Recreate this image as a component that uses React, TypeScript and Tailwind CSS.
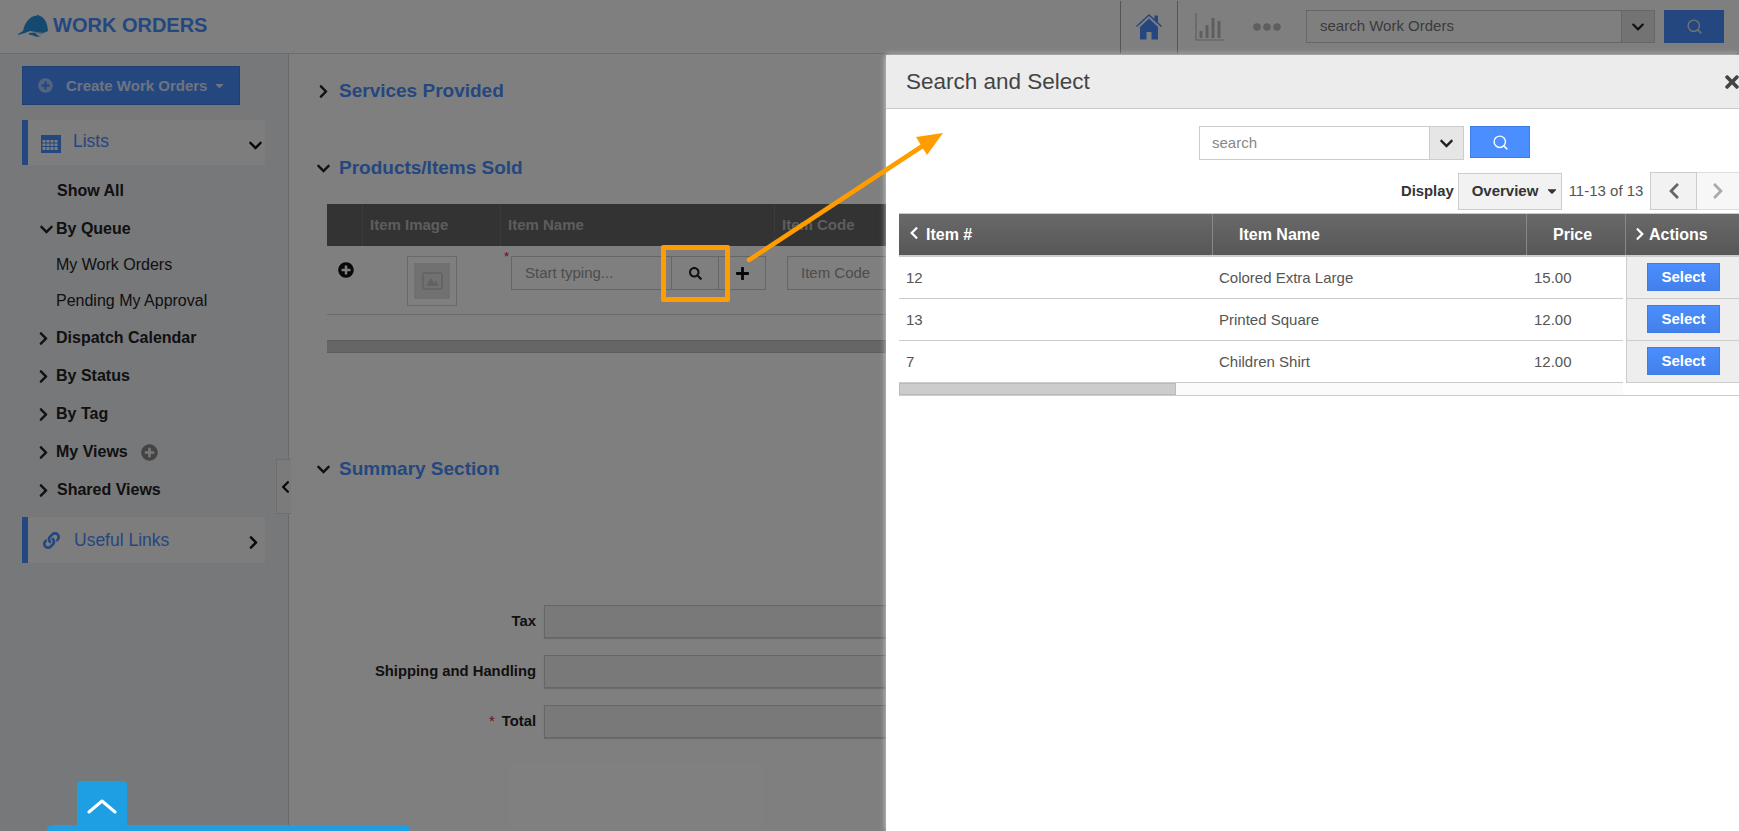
import React from "react";
import { FaChevronDown, FaChevronRight, FaChevronLeft, FaSearch, FaPlus, FaPlusCircle, FaLink, FaCaretDown, FaTimes } from "react-icons/fa";
import { FiSearch } from "react-icons/fi";

const Logo = () => (
  <svg width="32" height="24" viewBox="0 0 32 24" className="shrink-0">
    <path d="M1 20 L6 17 C8 8 13 2 20 1.5 L21 0.5 L22 1.5 C27 3 30.5 8 31 17 C28 18.5 26 19.5 22 19.5 L18 18 L13 17 L8 19 L1 21 Z" fill="#2b94e0" />
    <path d="M12 19 L18 18.5 L21 21.5 L24 22 L20 23 L16 21.5 L12 20.5 Z" fill="#2b94e0" />
    <path d="M16 17.5 L22 18.5 L27 19 L24 21 L21 19.5 L17 19 Z" fill="#cfd8e3" />
  </svg>
);

const HomeIcon = () => (
  <svg width="28" height="27" viewBox="0 0 28 27" fill="#4b8eff">
    <path d="M1 13 L14 1 L19.5 6 L19.5 2.5 L23 2.5 L23 9.2 L27 13 L26 14 L14 3 L2 14 Z" />
    <path d="M5 14 L14 5.5 L23 14 L23 26.5 L16.5 26.5 L16.5 19 L11.5 19 L11.5 26.5 L5 26.5 Z" />
  </svg>
);

const BarsIcon = () => (
  <svg width="29" height="28" viewBox="0 0 29 28" fill="none" stroke="#bdbdbd">
    <path d="M1 0 V27 H29" strokeWidth="1.2" />
    <path d="M6 25 V18 M12 25 V12 M18 25 V5 M24 25 V8" strokeWidth="3" />
  </svg>
);

const Dots = () => (
  <svg width="28" height="8" viewBox="0 0 28 8" fill="#bdbdbd">
    <circle cx="4" cy="4" r="3.8" />
    <circle cx="14" cy="4" r="3.8" />
    <circle cx="24" cy="4" r="3.8" />
  </svg>
);

const Calendar = () => (
  <svg width="20" height="18" viewBox="0 0 20 18" fill="#4b8eff">
    <path fillRule="evenodd" d="M0 0 H20 V18 H0 Z M1.5 5 V7.5 H4.5 V5 Z M5.5 5 V7.5 H8.5 V5 Z M9.5 5 V7.5 H12.5 V5 Z M13.5 5 V7.5 H16.5 V5 Z M1.5 8.5 V11 H4.5 V8.5 Z M5.5 8.5 V11 H8.5 V8.5 Z M9.5 8.5 V11 H12.5 V8.5 Z M13.5 8.5 V11 H16.5 V8.5 Z M1.5 12 V15 H4.5 V12 Z M5.5 12 V15 H8.5 V12 Z M9.5 12 V15 H12.5 V12 Z M13.5 12 V15 H16.5 V12 Z" />
  </svg>
);

const ImageGlyph = () => (
  <svg width="21" height="18" viewBox="0 0 21 18">
    <rect x="1" y="1" width="19" height="16" rx="1.5" fill="none" stroke="#c4c4c4" strokeWidth="1.6" />
    <path d="M4 14 L9 6 L12 11 L14 8.5 L17 14 Z" fill="#c4c4c4" />
  </svg>
);

const Arrow = () => (
  <svg className="absolute left-[740px] top-[125px] pointer-events-none" width="210" height="145" viewBox="0 0 210 145">
    <path d="M9 135 L184 20" stroke="#ff9c00" strokeWidth="4.5" strokeLinecap="round" />
    <polygon points="203,8 176,12 187,30" fill="#ff9c00" />
  </svg>
);

const NavRow = ({ label, bold = true, open, collapsed, h = "h-[38px]", extra }: any) => (
  <div className={`flex items-center ${h} text-[16px] ${bold ? "font-bold" : ""} text-[#222]`}>
    <span className="w-[16px] mr-[2px] ml-[38px] flex justify-center">
      {open && <FaChevronDown className="text-[15px]" />}
      {collapsed && <FaChevronRight className="text-[15px] -ml-[5px]" />}
    </span>
    <span>{label}</span>
    {extra}
  </div>
);

const Heading = ({ label, open }: { label: string; open?: boolean }) => (
  <div className="flex items-center h-[24px]">
    <span className="w-[23px] flex">
      {open ? <FaChevronDown className="text-[15px] text-[#222]" /> : <FaChevronRight className="text-[15px] text-[#222]" />}
    </span>
    <span className="text-[19px] font-bold text-[#4b8eff]">{label}</span>
  </div>
);

const FormRow = ({ label, star }: { label: string; star?: boolean }) => (
  <div className="flex items-center h-[33px]">
    <div className="w-[255px] pr-[8px] text-right text-[14.8px] font-bold text-[#222]">
      {star && <span className="text-[#e02020] font-normal mr-[7px]">*</span>}
      {label}
    </div>
    <div className="flex-1 h-full border border-[#ccc] bg-[#f3f3f3] shadow-[0_1px_1px_rgba(0,0,0,0.15)]" />
  </div>
);

const rows = [
  { id: "12", name: "Colored Extra Large", price: "15.00" },
  { id: "13", name: "Printed Square", price: "12.00" },
  { id: "7", name: "Children Shirt", price: "12.00" },
];

export default function App() {
  return (
    <div className="relative w-[1739px] h-[831px] overflow-hidden bg-white text-[#222] font-['Liberation_Sans',Arial,sans-serif]">
      {/* header */}
      <header className="flex items-center h-[54px] border-b border-[#d8d8d8] bg-white">
        <div className="ml-[17px] -mt-[2px]"><Logo /></div>
        <span className="ml-[4px] -mt-[4px] text-[20px] font-bold text-[#4b8eff]">WORK ORDERS</span>
        <div className="ml-auto flex items-center h-full">
          <div className="flex items-center justify-center w-[58px] h-[52px] border-x border-[#aaa]"><HomeIcon /></div>
          <div className="w-[62px] flex justify-center"><BarsIcon /></div>
          <div className="w-[54px] flex justify-center"><Dots /></div>
          <div className="flex ml-[12px] h-[33px] w-[349px] border border-[#ccc]">
            <div className="flex-1 pl-[13px] flex items-center text-[15px] text-[#777]">search Work Orders</div>
            <div className="w-[33px] border-l border-[#ccc] bg-[#e6e6e6] flex items-center justify-center"><FaChevronDown className="text-[14px] text-[#222]" /></div>
          </div>
          <div className="ml-[9px] mr-[15px] w-[60px] h-[33px] bg-[#4b8eff] flex items-center justify-center"><FiSearch className="text-[17px] text-[#e6e6e6]" /></div>
        </div>
      </header>

      <div className="flex h-[777px]">
        {/* sidebar */}
        <aside className="relative w-[289px] shrink-0 border-r border-[#d5d5d5] bg-[#eff0f4] pl-[22px] pt-[12px]">
          <div className="w-[218px] h-[39px] bg-[#4b8eff] border border-[#3f7de6] flex items-center pl-[15px] text-white">
            <FaPlusCircle className="text-[15px] text-[#a9c8ff]" />
            <span className="ml-[13px] mt-[1px] text-[15px] font-bold text-[#dbe7ff]">Create Work Orders</span>
            <FaCaretDown className="ml-[6px] text-[13px] text-[#dbe7ff]" />
          </div>
          <div className="mt-[15px] w-[243px] h-[45px] bg-[#fafafa] border-l-[6px] border-[#4b8eff] flex items-center">
            <span className="ml-[13px] mt-[2px]"><Calendar /></span>
            <span className="ml-[12px] text-[17.5px] text-[#4b8eff] -mt-[2px]">Lists</span>
            <FaChevronDown className="ml-auto mr-[2px] mt-[6px] text-[15px] text-[#111]" />
          </div>
          <div className="-ml-[22px] pt-[7px]">
            <NavRow label={<span className="ml-[1px]">Show All</span>} />
            <NavRow label="By Queue" open />
            <NavRow label="My Work Orders" bold={false} h="h-[34px]" />
            <NavRow label="Pending My Approval" bold={false} h="h-[37px]" />
            <NavRow label="Dispatch Calendar" collapsed />
            <NavRow label="By Status" collapsed />
            <NavRow label="By Tag" collapsed />
            <NavRow label="My Views" collapsed extra={<FaPlusCircle className="ml-[13px] text-[17px] text-[#888]" />} />
            <NavRow label={<span className="ml-[1px]">Shared Views</span>} collapsed />
          </div>
          <div className="mt-[8px] w-[243px] h-[46px] bg-[#fafafa] border-l-[6px] border-[#4b8eff] flex items-center">
            <FaLink className="ml-[15px] text-[17px] text-[#4b8eff]" />
            <span className="ml-[14px] text-[17.5px] text-[#4b8eff]">Useful Links</span>
            <FaChevronRight className="ml-auto mr-[4px] mt-[4px] text-[15px] text-[#111]" />
          </div>
          <div className="absolute left-[276px] top-[405px] w-[15px] h-[55px] border border-r-0 border-[#ddd] bg-[#f7f7f7] flex items-center pl-[3px]">
            <FaChevronLeft className="text-[14px] text-[#111]" />
          </div>
        </aside>

        {/* main */}
        <main className="flex-1 pl-[38px] pt-[25px]">
          <div className="-ml-[11px]"><Heading label="Services Provided" /></div>
          <div className="-ml-[11px] mt-[53px]"><Heading label="Products/Items Sold" open /></div>
          <div className="w-[1200px] mt-[24px]">
            <div className="flex h-[42px] bg-[#666] text-[15px] font-bold text-[#bbb] items-center">
              <div className="w-[36px] h-full border-r border-[#777]" />
              <div className="w-[138px] h-full border-r border-[#777] pl-[7px] flex items-center">Item Image</div>
              <div className="w-[274px] h-full border-r border-[#777] pl-[7px] flex items-center">Item Name</div>
              <div className="pl-[7px]">Item Code</div>
            </div>
            <div className="flex h-[69px] border-b border-[#d5d5d5] pt-[10px]">
              <FaPlusCircle className="ml-[11px] mt-[6px] text-[16px] text-[#111] shrink-0" />
              <div className="ml-[53px] w-[50px] h-[50px] border border-[#d5d5d5] p-[6px] shrink-0">
                <div className="w-full h-full bg-[#e3e3e3] flex items-center justify-center"><ImageGlyph /></div>
              </div>
              <div className="relative ml-[54px] flex h-[34px]">
                <span className="absolute -left-[7px] -top-[6px] text-[13px] leading-none text-[#e02020]">*</span>
                <div className="w-[161px] border border-[#ccc] pl-[13px] flex items-center text-[15px] text-[#999]">Start typing...</div>
                <div className="w-[47px] border border-l-0 border-[#ccc] flex items-center justify-center"><FaSearch className="text-[13px] text-[#222]" /></div>
                <div className="w-[47px] border border-l-0 border-[#ccc] flex items-center justify-center"><FaPlus className="text-[15px] text-[#111]" /></div>
                <div className="ml-[21px] w-[200px] border border-[#ccc] pl-[13px] flex items-center text-[15px] text-[#999]">Item Code</div>
              </div>
            </div>
            <div className="mt-[25px] h-[13px] bg-[#ccc] border-y border-[#bbb]" />
          </div>
          <div className="-ml-[11px] mt-[104px]"><Heading label="Summary Section" open /></div>
          <div className="-ml-[38px] mt-[124px] w-[1000px] flex flex-col gap-[17px]">
            <FormRow label="Tax" />
            <FormRow label="Shipping and Handling" />
            <FormRow label="Total" star />
          </div>
        </main>
      </div>

      {/* dim layer */}
      <div className="absolute inset-0 bg-black/50" />

      {/* back to top */}
      <div className="absolute left-[77px] bottom-[6px] w-[50px] h-[44px] rounded-t-[4px] bg-[#1e9fe3] flex items-center justify-center">
        <svg width="30" height="16" viewBox="0 0 30 16" fill="none" stroke="#fff" strokeWidth="3" strokeLinecap="round" strokeLinejoin="round" className="mt-[6px]"><path d="M2 14 L15 3 L28 14" /></svg>
      </div>
      <div className="absolute left-[47px] bottom-0 w-[363px] h-[6px] rounded-t-[5px] bg-[#1e9fe3]" />

      {/* modal */}
      <div className="absolute left-[886px] top-[55px] w-[853px] h-[776px] bg-white shadow-[0_0_6px_rgba(255,255,255,0.7)] overflow-hidden">
        <div className="flex items-center h-[54px] bg-[#ececec] border-b border-[#ccc] pl-[20px]">
          <span className="text-[22.5px] text-[#444]">Search and Select</span>
          <FaTimes className="ml-auto -mr-[3px] text-[20px] text-[#444]" />
        </div>
        <div className="flex h-[34px] mt-[17px] ml-[313px]">
          <div className="flex w-[265px] h-[34px] border border-[#ccc]">
            <div className="flex-1 pl-[12px] flex items-center text-[15px] text-[#888]">search</div>
            <div className="w-[34px] border-l border-[#ccc] bg-[#e6e6e6] flex items-center justify-center"><FaChevronDown className="text-[15px] text-[#222]" /></div>
          </div>
          <div className="ml-[6px] w-[60px] h-[32px] bg-[#4b8eff] border border-[#3f7de6] flex items-center justify-center"><FiSearch className="text-[17px] text-white" /></div>
        </div>
        <div className="flex items-center h-[38px] mt-[12px] ml-[515px] text-[#333] whitespace-nowrap">
          <span className="text-[14.8px] font-bold">Display</span>
          <div className="ml-[4px] w-[104px] h-[37px] shrink-0 bg-[#f2f2f2] border border-[#ccc] flex items-center pl-[13px] text-[15px] font-bold">
            Overview<FaCaretDown className="ml-[7px] text-[14px]" />
          </div>
          <span className="ml-[7px] text-[15px] text-[#555]">11-13 of 13</span>
          <div className="ml-[7px] w-[47px] h-[38px] shrink-0 bg-[#f2f2f2] border border-[#ccc] flex items-center justify-center"><FaChevronLeft className="text-[18px] text-[#666]" /></div>
          <div className="w-[42px] h-[38px] shrink-0 bg-[#f7f7f7] border-y border-[#ddd] flex items-center justify-center"><FaChevronRight className="text-[18px] text-[#aaa]" /></div>
        </div>

        <div className="ml-[13px] mt-[3px]">
          <div className="flex h-[44px] border-t border-[#ccc] border-b-2 border-b-[#ccc] bg-gradient-to-b from-[#696969] to-[#575757] text-[16px] font-bold text-white">
            <div className="w-[314px] border-r border-[#888] flex items-center pl-[8px]"><FaChevronLeft className="text-[14px] mr-[5px] -mt-[3px]" />Item #</div>
            <div className="w-[314px] border-r border-[#888] flex items-center pl-[26px]">Item Name</div>
            <div className="w-[99px] border-r border-[#888] flex items-center pl-[26px]">Price</div>
            <div className="flex-1 flex items-center pl-[7px]"><FaChevronRight className="text-[14px] mr-[2px] -mt-[2px]" />Actions</div>
          </div>
          {rows.map((r) => (
            <div key={r.id} className="flex h-[42px] text-[15px] text-[#555]">
              <div className="w-[724px] flex items-center border-b border-[#ccc] pt-[2px]">
                <div className="w-[320px] pl-[7px]">{r.id}</div>
                <div className="w-[315px]">{r.name}</div>
                <div>{r.price}</div>
              </div>
              <div className="ml-[3px] flex-1 bg-[#eee] border-l border-b border-[#ccc] pl-[20px] pt-[6px]">
                <div className="w-[73px] h-[28px] border border-[#3f7de6] bg-gradient-to-b from-[#4b8eff] to-[#4480ea] flex items-center justify-center text-[15px] font-bold text-white">Select</div>
              </div>
            </div>
          ))}
          <div className="h-[13px] border-b border-[#ccc]">
            <div className="w-[724px] h-full bg-[#fbfbfb]">
              <div className="w-[277px] h-full bg-[#ccc] border border-[#bbb]" />
            </div>
          </div>
        </div>
      </div>

      {/* annotation */}
      <div className="absolute left-[661px] top-[245px] w-[69px] h-[57px] border-[5px] border-[#ff9c00] rounded-[2px]" />
      <Arrow />
    </div>
  );
}
